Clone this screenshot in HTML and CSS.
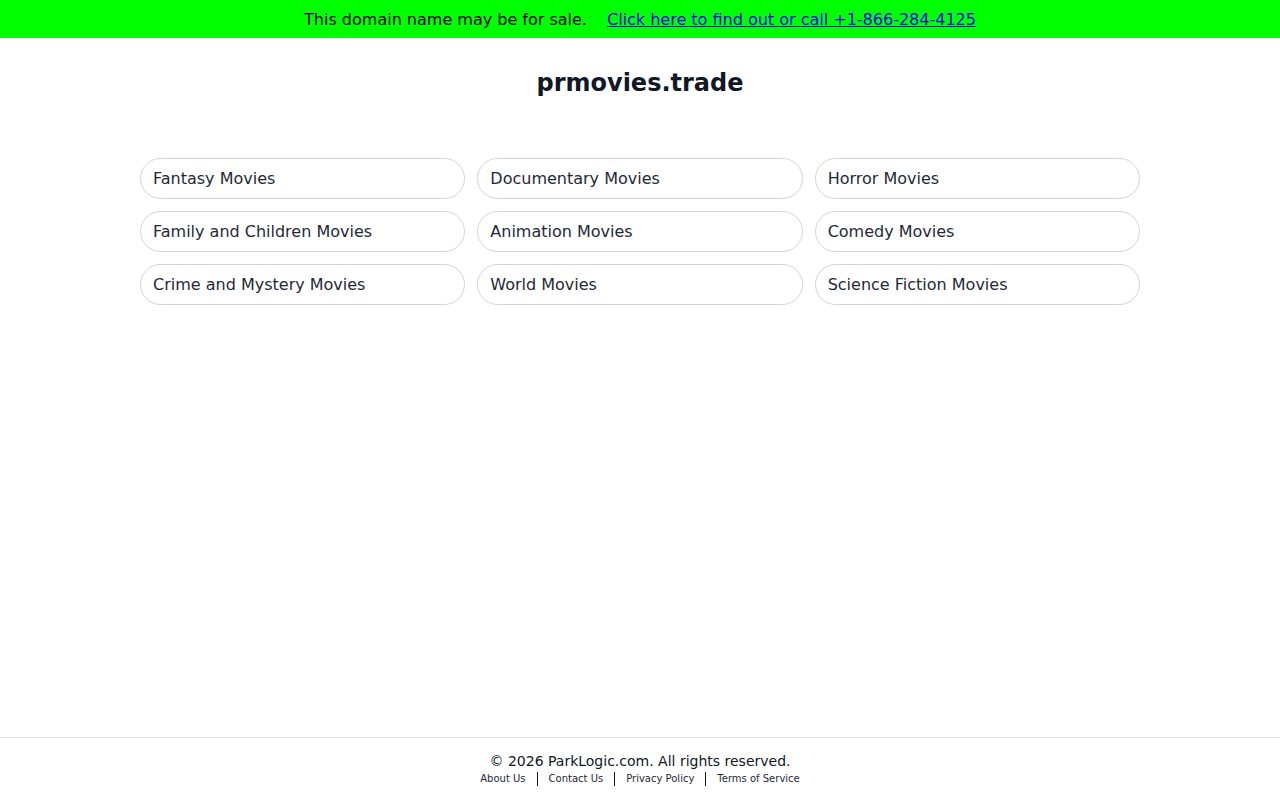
FILE: index.html
```html
<!DOCTYPE html>
<html lang="en">
<head>
<meta charset="utf-8">
<title>prmovies.trade</title>
<link rel="stylesheet" href="styles.css">
</head>
<body>
<div class="page">
  <div class="sale-bar">
    <span>This domain name may be for sale.</span>
    <a class="sale-link" href="#">Click here to find out or call +1-866-284-4125</a>
  </div>
  <main class="content">
    <h1 class="domain">prmovies.trade</h1>
    <div class="links">
      <a class="pill" href="#">Fantasy Movies</a>
      <a class="pill" href="#">Documentary Movies</a>
      <a class="pill" href="#">Horror Movies</a>
      <a class="pill" href="#">Family and Children Movies</a>
      <a class="pill" href="#">Animation Movies</a>
      <a class="pill" href="#">Comedy Movies</a>
      <a class="pill" href="#">Crime and Mystery Movies</a>
      <a class="pill" href="#">World Movies</a>
      <a class="pill" href="#">Science Fiction Movies</a>
    </div>
  </main>
  <footer class="footer">
    <div class="copy">© 2026 ParkLogic.com. All rights reserved.</div>
    <nav class="footer-nav">
      <a href="#">About Us</a>
      <span class="sep"></span>
      <a href="#">Contact Us</a>
      <span class="sep"></span>
      <a href="#">Privacy Policy</a>
      <span class="sep"></span>
      <a href="#">Terms of Service</a>
    </nav>
  </footer>
</div>
</body>
</html>
```
FILE: styles.css
```css
html, body {
  margin: 0;
  padding: 0;
}

body {
  font-family: "DejaVu Sans", sans-serif;
  color: #111827;
  background: #fff;
}

.page {
  min-height: 100vh;
  display: flex;
  flex-direction: column;
}

.sale-bar {
  background: #00ff00;
  height: 38px;
  display: flex;
  align-items: center;
  justify-content: center;
  gap: 20px;
  font-size: 16px;
  color: #000;
}

.sale-link {
  color: #0000ee;
  text-decoration: underline;
}

.content {
  width: 1000px;
  margin: 0 auto;
  padding-top: 29px;
}

.domain {
  margin: 0;
  text-align: center;
  font-size: 24px;
  line-height: 32px;
  font-weight: 700;
  color: #111827;
}

.links {
  margin-top: 59px;
  display: grid;
  grid-template-columns: repeat(3, 1fr);
  gap: 12px;
}

.pill {
  display: flex;
  align-items: center;
  height: 41px;
  box-sizing: border-box;
  padding: 0 12px;
  border: 1px solid #d1d5db;
  border-radius: 9999px;
  font-size: 16px;
  color: #1f2937;
  text-decoration: none;
}

.footer {
  margin-top: auto;
  border-top: 1px solid #e5e7eb;
  padding: 13px 0 14px;
  text-align: center;
}

.copy {
  font-size: 14px;
  line-height: 20px;
  color: #111827;
}

.footer-nav {
  display: flex;
  justify-content: center;
  align-items: center;
  gap: 11px;
  height: 15px;
}

.footer-nav a {
  font-size: 10px;
  color: #1f2937;
  text-decoration: none;
}

.sep {
  width: 1px;
  height: 14px;
  background: #111827;
}
```
